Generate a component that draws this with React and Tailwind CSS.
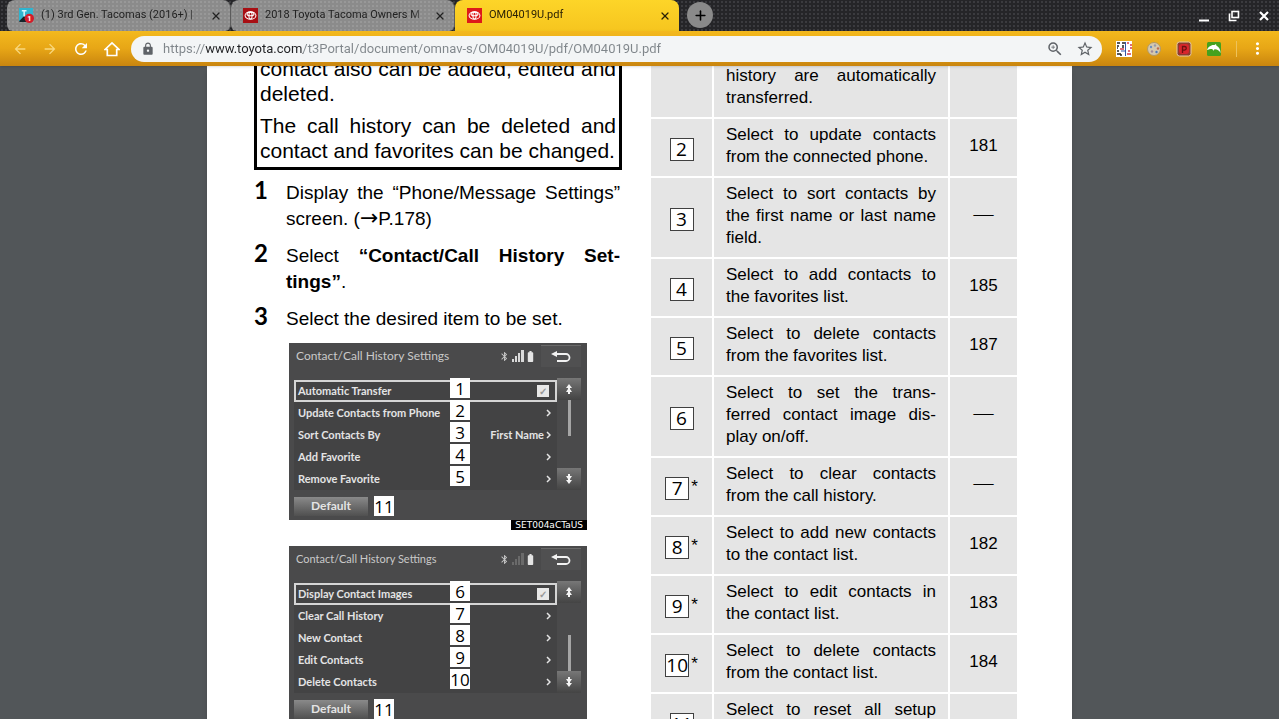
import { MdArrowBack, MdArrowForward, MdRefresh, MdLock, MdStarBorder, MdZoomIn, MdMoreVert, MdBluetooth, MdBatteryFull } from 'react-icons/md';
import { Plus, X } from 'lucide-react';

const SCREENS = [
  {
    titleSize: 'text-xs',
    rows: [
      { n: 1, label: 'Automatic Transfer', check: true },
      { n: 2, label: 'Update Contacts from Phone' },
      { n: 3, label: 'Sort Contacts By', value: 'First Name' },
      { n: 4, label: 'Add Favorite' },
      { n: 5, label: 'Remove Favorite' },
    ],
    thumb: 'top',
    code: 'SET004aCTaUS',
  },
  {
    titleSize: 'text-[11px]',
    rows: [
      { n: 6, label: 'Display Contact Images', check: true },
      { n: 7, label: 'Clear Call History' },
      { n: 8, label: 'New Contact' },
      { n: 9, label: 'Edit Contacts' },
      { n: 10, label: 'Delete Contacts' },
    ],
    thumb: 'bottom',
  },
];

// each entry of lines is one typeset line, the last one is left ragged
const ITEMS = [
  { n: 2, lines: ['Select to update contacts', 'from the connected phone.'], page: '181' },
  { n: 3, lines: ['Select to sort contacts by', 'the first name or last name', 'field.'] },
  { n: 4, lines: ['Select to add contacts to', 'the favorites list.'], page: '185' },
  { n: 5, lines: ['Select to delete contacts', 'from the favorites list.'], page: '187' },
  { n: 6, lines: ['Select to set the trans-', 'ferred contact image dis-', 'play on/off.'] },
  { n: 7, star: true, lines: ['Select to clear contacts', 'from the call history.'] },
  { n: 8, star: true, lines: ['Select to add new contacts', 'to the contact list.'], page: '182' },
  { n: 9, star: true, lines: ['Select to edit contacts in', 'the contact list.'], page: '183' },
  { n: 10, star: true, lines: ['Select to delete contacts', 'from the contact list.'], page: '184' },
  { n: 11, lines: ['Select to reset all setup', 'items.'] },
];

function ToyotaIcon({ bg }) {
  return (
    <svg viewBox="0 0 16 16" className="size-[15px] shrink-0">
      <rect width="16" height="16" fill={bg} />
      <g fill="none" stroke="#fff" strokeWidth="1.1">
        <ellipse cx="8" cy="8" rx="5.8" ry="4" />
        <ellipse cx="8" cy="6.3" rx="3.8" ry="1.9" />
        <ellipse cx="8" cy="8" rx="1.7" ry="3.8" />
      </g>
    </svg>
  );
}

function ForumIcon() {
  return (
    <svg viewBox="0 0 16 16" className="size-[15px] shrink-0">
      <rect width="15" height="14" fill="#2fb4cf" />
      <path d="M3 3h5M5.5 3v6" stroke="#d8f6ff" strokeWidth="1.6" />
      <path d="M0 14l5-5 4 1v5H1z" fill="#15252b" />
      <circle cx="11" cy="11" r="5" fill="#d31c2b" />
      <text x="11" y="14" fontSize="8" fontWeight="700" fill="#fff" textAnchor="middle" fontFamily="Roboto">1</text>
    </svg>
  );
}

function Tab({ icon, title, active }) {
  return (
    <div
      className={`flex w-56 items-center rounded-t-lg pl-3 pr-1.5 text-[11px] ${
        active
          ? 'bg-linear-to-b from-[#fdd528] to-[#f6c51f] text-[#2b2205]'
          : 'rounded-b-md border-r border-[#5c5c5c] bg-[#8b8b8b] bg-[radial-gradient(#989898_35%,transparent_40%)] bg-size-[4px_4px] text-[#222]'
      }`}
    >
      {icon}
      <a href="#tab" className="ml-[7px] min-w-0 flex-1 whitespace-nowrap mask-r-from-90%">{title}</a>
      <button aria-label="Close tab" className="ml-1 p-0.5">
        <X size={12} strokeWidth={2.5} />
      </button>
    </div>
  );
}

function TabStrip() {
  return (
    <div className="flex h-[31px] bg-[#252528] bg-[radial-gradient(#3b3b3f_35%,transparent_40%)] bg-size-[4px_4px] pl-[7px]">
      <Tab icon={<ForumIcon />} title="(1) 3rd Gen. Tacomas (2016+) |" />
      <Tab icon={<ToyotaIcon bg="#a80f14" />} title="2018 Toyota Tacoma Owners M" />
      <Tab icon={<ToyotaIcon bg="#dd1a1a" />} title="OM04019U.pdf" active />
      <button aria-label="New tab" className="ml-2 mt-0.5 flex size-[26px] items-center justify-center rounded-full bg-[#8a8a8a]">
        <Plus size={15} strokeWidth={2.5} />
      </button>
      <div className="ml-auto flex items-center gap-4 pr-2 text-white">
        <button aria-label="Minimize">
          <svg viewBox="0 0 14 14" className="size-3.5"><path d="M2 11.5h10" stroke="currentColor" strokeWidth="2" /></svg>
        </button>
        <button aria-label="Restore">
          <svg viewBox="0 0 14 14" className="size-3.5" fill="none" stroke="currentColor" strokeWidth="1.6">
            <rect x="5" y="2.5" width="6.5" height="6" />
            <path d="M2.5 4.5v7h7" />
          </svg>
        </button>
        <button aria-label="Close">
          <svg viewBox="0 0 14 14" className="size-3.5"><path d="M3 3l8 8M11 3l-8 8" stroke="currentColor" strokeWidth="2.2" /></svg>
        </button>
      </div>
    </div>
  );
}

function Extensions() {
  return (
    <div className="ml-3.5 flex items-center gap-3.5">
      <button aria-label="Card games">
        <svg viewBox="0 0 16 16" className="size-4">
          <rect width="16" height="16" fill="#fff" />
          <path d="M1 2h3M6 2h3M1 5h2M1 13h4M1 10h2M5 13v2M7 4v3M1 7h1" stroke="#222" strokeWidth="1.5" />
          <path d="M11 2h2M15 3v2M11 13h4M12 10h2M4 8h4M14 7h2" stroke="#d43c4c" strokeWidth="1.5" />
          <path d="M9.5 1v14M5 10h5" stroke="#3557a8" strokeWidth="1" />
        </svg>
      </button>
      <button aria-label="Palette">
        <svg viewBox="0 0 16 16" className="size-4">
          <circle cx="8" cy="8" r="6.5" fill="#d6c9ae" stroke="#b39a66" />
          <circle cx="5" cy="6" r="1.2" fill="#6c8fc0" />
          <circle cx="9" cy="4.5" r="1.2" fill="#9a9aa8" />
          <circle cx="12" cy="7.5" r="1.2" fill="#c06a4a" />
          <circle cx="6" cy="10.5" r="1.2" fill="#a08a9a" />
          <circle cx="10.5" cy="11" r="1.2" fill="#4f7ab8" />
        </svg>
      </button>
      <button aria-label="Pin">
        <svg viewBox="0 0 16 16" className="size-4">
          <rect x="1" y="1" width="14" height="14" rx="2.5" fill="#8f3a2d" stroke="#e3c9a4" />
          <rect x="3" y="3" width="10" height="10" rx="3" fill="#d8262c" />
          <path d="M6.5 12V5.500h2a1.800 1.800 0 010 3.600h-2" fill="none" stroke="#6c1010" strokeWidth="1.3" />
        </svg>
      </button>
      <button aria-label="Dolphin">
        <svg viewBox="0 0 16 16" className="size-4">
          <rect x="1" y="1" width="14" height="14" rx="1.5" fill="#45a11e" />
          <path d="M1 9c1-3 4-5.500 7.500-5l1.500-1 .3 1.500C13.500 6 14.500 9 14.500 12c-1.500-3-3.500-4-6-3.800l-1 1.600-1.300-1.800C4 8 2.500 8.500 1 9z" fill="#fff" />
        </svg>
      </button>
    </div>
  );
}

function Toolbar() {
  return (
    <div className="z-10 flex h-[35px] items-center bg-linear-to-b from-[#f3b91d] via-[#e7a616] to-[#c9850f] px-3 shadow">
      <div className="flex items-center gap-3.5 text-white">
        <button aria-label="Back" className="text-[#f9d980]"><MdArrowBack size={16} /></button>
        <button aria-label="Forward" className="text-[#f9d980]"><MdArrowForward size={16} /></button>
        <button aria-label="Reload"><MdRefresh size={18} /></button>
        <button aria-label="Home">
          <svg viewBox="0 0 16 16" className="size-4" fill="none" stroke="currentColor" strokeWidth="1.7">
            <path d="M1 8.500L8 2l7 6.500h-2.300V14.500H3.300V8.500z" />
          </svg>
        </button>
      </div>
      <div className="ml-[11px] flex h-[26px] min-w-0 flex-1 items-center rounded-full bg-[#f3f5f6] pr-2 pl-2.5 text-[#5f6368]">
        <MdLock size={14} />
        <input
          aria-label="Address"
          defaultValue="https://www.toyota.com/t3Portal/document/omnav-s/OM04019U/pdf/OM04019U.pdf"
          className="ml-2 min-w-0 flex-1 bg-[linear-gradient(90deg,#80868b_42px,#202124_42px_140px,#80868b_140px)] bg-clip-text text-[13px] text-transparent outline-none"
        />
        <button aria-label="Zoom" className="ml-3"><MdZoomIn size={18} /></button>
        <button aria-label="Bookmark" className="ml-3"><MdStarBorder size={18} /></button>
      </div>
      <Extensions />
      <div className="ml-3.5 h-4 w-px bg-[#eec25a]" />
      <button aria-label="Menu" className="ml-[11px] text-white"><MdMoreVert size={19} /></button>
    </div>
  );
}

function FigureBadge({ n }) {
  return (
    <span className="flex size-5 items-center justify-center bg-white font-['Open_Sans'] text-[17px] leading-none text-black">
      {n}
    </span>
  );
}

function ScrollArrow({ label, down }) {
  return (
    <button aria-label={label} className="flex h-[22px] w-6 items-center justify-center bg-linear-to-b from-[#777] to-[#444]">
      <svg viewBox="0 0 10 12" className={`h-3 w-2.5 fill-neutral-100 ${down ? 'rotate-180' : ''}`}>
        <path d="M5 1l3 4H6v1l2 3H6v2H4V9H2l2-3V5H2z" />
      </svg>
    </button>
  );
}

function DeviceScreen({ screen }) {
  return (
    <figure className="font-['Lato',sans-serif]">
      <div className="relative bg-[#4a4a4b] pr-1.5 pb-1 pl-[5px]">
        <div className="flex h-[26px] items-center pl-0.5 text-[#c9c9c9]">
          <span className={screen.titleSize}>Contact/Call History Settings</span>
          <MdBluetooth size={11} className="ml-auto" />
          <svg viewBox="0 0 12 12" className={`ml-0.5 size-3 ${screen.thumb === 'top' ? 'fill-[#d9d9d9]' : 'fill-[#6a6a6a]'}`}>
            <path d="M0 9h2v3H0zM3 6h2v6H3zM6 3h2v9H6zM9 0h3v12H9z" />
          </svg>
          <MdBatteryFull size={13} className="text-[#e4e4e4]" />
          <button aria-label="Return" className="ml-1 flex h-[22px] w-10 items-center justify-center border-t border-[#6a6a6a] bg-[#505051]">
            <svg viewBox="0 0 22 12" className="h-3 w-[22px]">
              <path d="M5 3h11a3.500 3.500 0 010 7H7" fill="none" stroke="#f2f2f2" strokeWidth="1.8" />
              <path d="M1 3l6-3v6z" fill="#f2f2f2" />
            </svg>
          </button>
        </div>
        <div className="mt-[11px] flex">
          <ul className="min-w-0 flex-1 bg-[#434344] text-[11px] font-bold text-[#e4e4e4]">
            {screen.rows.map(row => (
              <li
                key={row.n}
                className={`flex h-[22px] items-center justify-between ${row.check ? 'border-2 border-[#d5d5d5] px-0.5' : 'px-1'}`}
              >
                <label htmlFor={`item-${row.n}`}>{row.label}</label>
                {row.check ? (
                  <input
                    id={`item-${row.n}`}
                    type="checkbox"
                    defaultChecked
                    className="mr-1 flex size-3 appearance-none items-center justify-center bg-[#e8e8e8] text-[10px] leading-none text-[#999] before:content-['✓']"
                  />
                ) : (
                  <button id={`item-${row.n}`} className="mr-0.5 flex items-center gap-0.5">
                    {row.value}
                    <svg viewBox="0 0 5 8" className="h-2 w-[5px]"><path d="M1 1l3 3-3 3" fill="none" stroke="currentColor" strokeWidth="1.5" /></svg>
                  </button>
                )}
              </li>
            ))}
          </ul>
          <div className="-mt-0.5 flex flex-col items-center">
            <ScrollArrow label="Page up" />
            <div className={`flex w-[3px] flex-1 ${screen.thumb === 'top' ? 'items-start' : 'items-end'}`}>
              <div className="h-9 w-full bg-[#a5a5a5]" />
            </div>
            <ScrollArrow label="Page down" down />
          </div>
        </div>
        <div className="mt-1.5 flex h-5 items-center">
          <button className="h-[19px] w-[74px] bg-linear-to-b from-[#8a8a8a] to-[#505050] text-xs leading-none font-bold text-[#e4e4e4]">
            Default
          </button>
          <span className="ml-1.5"><FigureBadge n={11} /></span>
        </div>
        {/* callout numbers over the list */}
        <div className="absolute top-[35px] left-[161px] flex flex-col gap-0.5">
          {screen.rows.map(row => <FigureBadge key={row.n} n={row.n} />)}
        </div>
      </div>
      {screen.code && (
        <figcaption className="ml-auto h-2.5 w-fit bg-black px-1 font-['DejaVu_Sans'] text-[9px] leading-[10px] text-white">
          {screen.code}
        </figcaption>
      )}
    </figure>
  );
}

function Step({ n, children }) {
  return (
    <li className="flex items-baseline">
      <span className="w-8 shrink-0 font-['Lato'] text-2xl leading-5 font-bold">{n}</span>
      <p className="flex-1 text-justify text-[19px] leading-[26px]">{children}</p>
    </li>
  );
}

function ItemTable() {
  return (
    <table className="w-full table-fixed border-collapse text-[17px] leading-[22px]">
      <colgroup>
        <col className="w-[62px]" />
        <col />
        <col className="w-[68px]" />
      </colgroup>
      <tbody>
        <tr className="border-b-2 border-white bg-[#e5e5e5]">
          <td className="border-r-2 border-white" />
          <td className="border-r-2 border-white px-3 pt-[9px] pb-2 text-justify">history are automatically transferred.</td>
          <td />
        </tr>
        {ITEMS.map(item => (
          <tr key={item.n} className="border-b-2 border-white bg-[#e5e5e5]">
            <td className="border-r-2 border-white pt-1">
              <div className="flex justify-center gap-0.5">
                <span className="flex h-[23px] w-6 items-center justify-center border border-neutral-700 bg-white font-['Open_Sans'] text-[19px] leading-none">
                  {item.n}
                </span>
                {item.star && <span className="leading-5">*</span>}
              </div>
            </td>
            <td className="border-r-2 border-white px-3 pt-[5px] pb-2">
              {item.lines.map(line => (
                <span key={line} className="block [text-align-last:justify] last:[text-align-last:left]">{line}</span>
              ))}
            </td>
            <td className="pb-1 text-center">
              {item.page || <span className="font-['Liberation_Serif'] text-xl leading-none">—</span>}
            </td>
          </tr>
        ))}
      </tbody>
    </table>
  );
}

export default function App() {
  return (
    <div className="flex h-screen flex-col overflow-hidden bg-[#525659] font-['Roboto']">
      <TabStrip />
      <Toolbar />
      <main className="flex min-h-0 flex-1 justify-center overflow-hidden">
        <article className="flex w-full max-w-[865px] self-start bg-white pr-[55px] pl-[47px] font-['Liberation_Sans',sans-serif] text-black shadow-md">
          <div className="-mt-2.5 w-[368px] shrink-0">
            <div className="border-x-3 border-b-3 border-black px-[3px] pb-1 text-justify text-[21px] leading-[25px]">
              <p>contact also can be added, edited and deleted.</p>
              <p className="mt-[7px]">The call history can be deleted and contact and favorites can be changed.</p>
            </div>
            <ol className="mt-2.5 flex flex-col gap-[11px] pr-0.5">
              <Step n={1}>
                Display the “Phone/Message Settings” screen. (<span className="font-['DejaVu_Sans'] text-[22px] leading-none">→</span>P.178)
              </Step>
              <Step n={2}>Select <b>“Contact/Call History Set&shy;tings”</b>.</Step>
              <Step n={3}>Select the desired item to be set.</Step>
            </ol>
            <div className="mt-[11px] flex flex-col gap-4 px-[35px]">
              {SCREENS.map(screen => <DeviceScreen key={screen.thumb} screen={screen} />)}
            </div>
          </div>
          <div className="-mt-2.5 ml-[29px] min-w-0 flex-1">
            <ItemTable />
          </div>
        </article>
      </main>
    </div>
  );
}
